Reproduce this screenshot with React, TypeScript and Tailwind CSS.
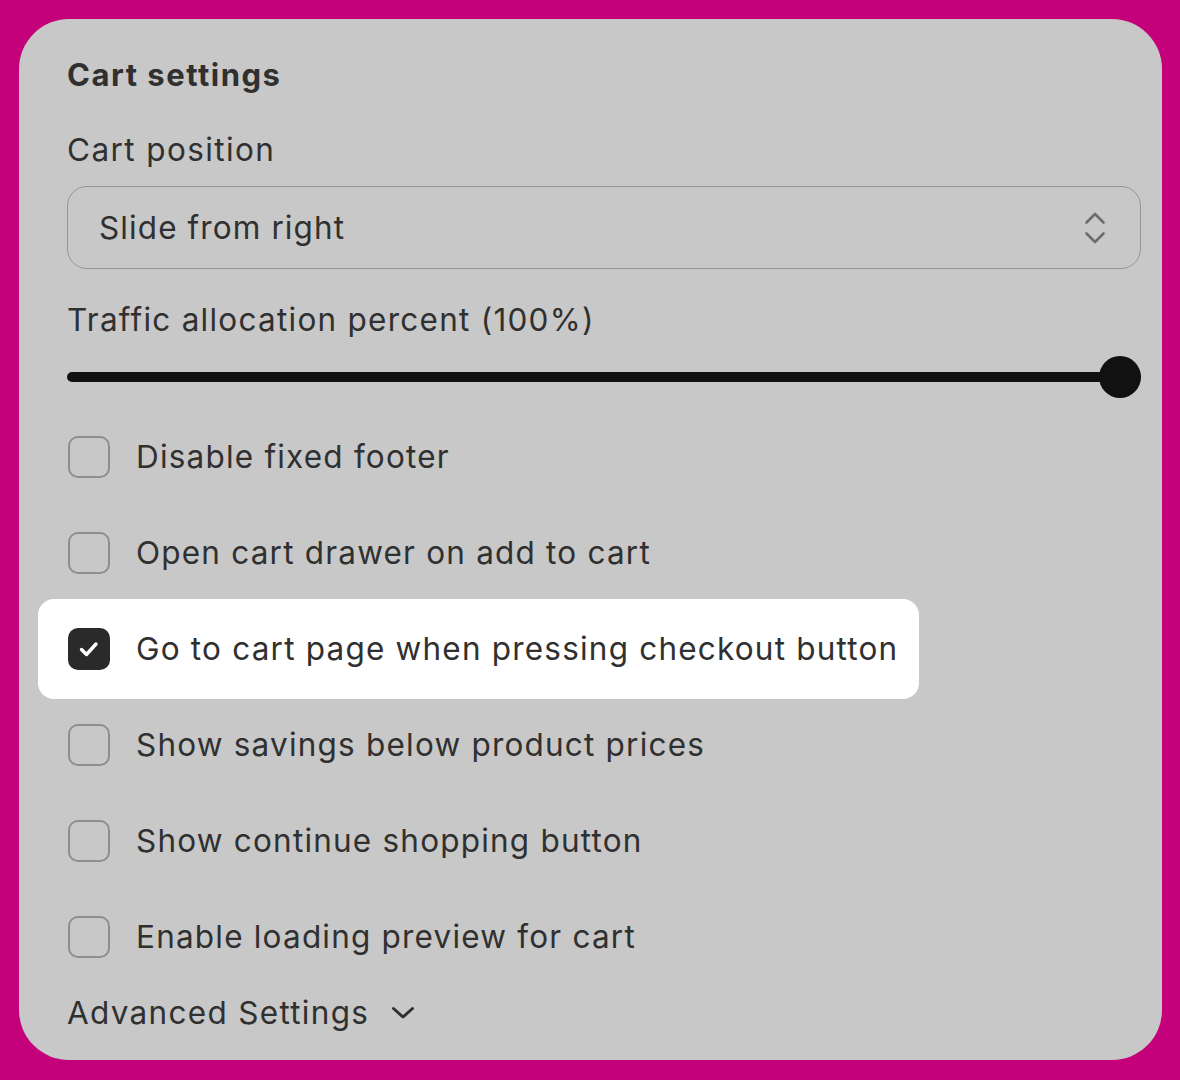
const options = [
  { label: "Disable fixed footer", checked: false },
  { label: "Open cart drawer on add to cart", checked: false },
  { label: "Go to cart page when pressing checkout button", checked: true },
  { label: "Show savings below product prices", checked: false },
  { label: "Show continue shopping button", checked: false },
  { label: "Enable loading preview for cart", checked: false },
];

function Checkbox({ checked }: { checked: boolean }) {
  if (checked) {
    return (
      <span className="flex h-[42px] w-[42px] shrink-0 items-center justify-center rounded-[10px] bg-[#2a2a2a]">
        <svg width="24" height="24" viewBox="0 0 24 24" fill="none">
          <path d="M4.5 12.5l5 5 9.5-10.5" stroke="#fff" strokeWidth="3.4" strokeLinecap="round" strokeLinejoin="round" />
        </svg>
      </span>
    );
  }
  return <span className="h-[42px] w-[42px] shrink-0 rounded-[10px] border-2 border-[#8e8e8e]" />;
}

export default function App() {
  return (
    <div
      className="min-h-screen w-[1180px] bg-[#c4007a] pt-[19px] pl-[19px]"
      style={{ fontFamily: "Inter, 'Noto Sans', sans-serif" }}
    >
      <div className="h-[1041px] w-[1143px] rounded-[50px] bg-[#c8c8c8] pl-[48px] pr-[21px] pt-[36px] text-[#303030]">
        <h2 className="h-10 text-[31px] font-bold leading-10 tracking-[1.5px]">Cart settings</h2>

        <div className="mt-[35px] h-10 text-[31.5px] leading-10 tracking-[1.4px]">Cart position</div>

        <div className="mt-[16px] flex h-[83px] items-center justify-between rounded-[20px] border-[1.5px] border-[#959595] pl-[31px] pr-[34px]">
          <span className="text-[31.5px] tracking-[1.1px]">Slide from right</span>
          <svg width="22" height="36" viewBox="0 0 22 36" fill="none">
            <path d="M2.5 12.5L11 4l8.5 8.5M2.5 23.5L11 32l8.5-8.5" stroke="#6c6c6c" strokeWidth="2.6" strokeLinecap="round" strokeLinejoin="round" />
          </svg>
        </div>

        <div className="mt-[31px] h-10 text-[31.5px] leading-10 tracking-[1.25px]">Traffic allocation percent (100%)</div>

        <div className="relative mt-[16px] flex h-[42px] items-center">
          <div className="h-[10px] w-full rounded-full bg-[#111]" />
          <div className="absolute right-0 top-0 h-[42px] w-[42px] rounded-full bg-[#111]" />
        </div>

        <div className="mt-[11px] flex flex-col">
          {options.map((o) =>
            o.checked ? (
              <div key={o.label} className="-my-[2px] h-[100px]">
                <div className="-ml-[29px] inline-flex h-[100px] items-center gap-[26px] rounded-[16px] bg-white pl-[30px] pr-[21px]">
                  <Checkbox checked />
                  <span className="text-[31.5px] tracking-[1.2px]">{o.label}</span>
                </div>
              </div>
            ) : (
              <div key={o.label} className="flex h-[96px] items-center gap-[26px] pl-px">
                <Checkbox checked={false} />
                <span className="text-[31.5px] tracking-[1.2px]">{o.label}</span>
              </div>
            )
          )}
        </div>

        <div className="mt-[8px] flex h-10 items-center gap-[22px] text-[31.5px] leading-10">
          <span className="tracking-[1.3px]">Advanced Settings</span>
          <svg width="24" height="16" viewBox="0 0 24 16" fill="none">
            <path d="M2.5 3.5L12 12l9.5-8.5" stroke="#303030" strokeWidth="3" strokeLinecap="round" strokeLinejoin="round" />
          </svg>
        </div>
      </div>
    </div>
  );
}
